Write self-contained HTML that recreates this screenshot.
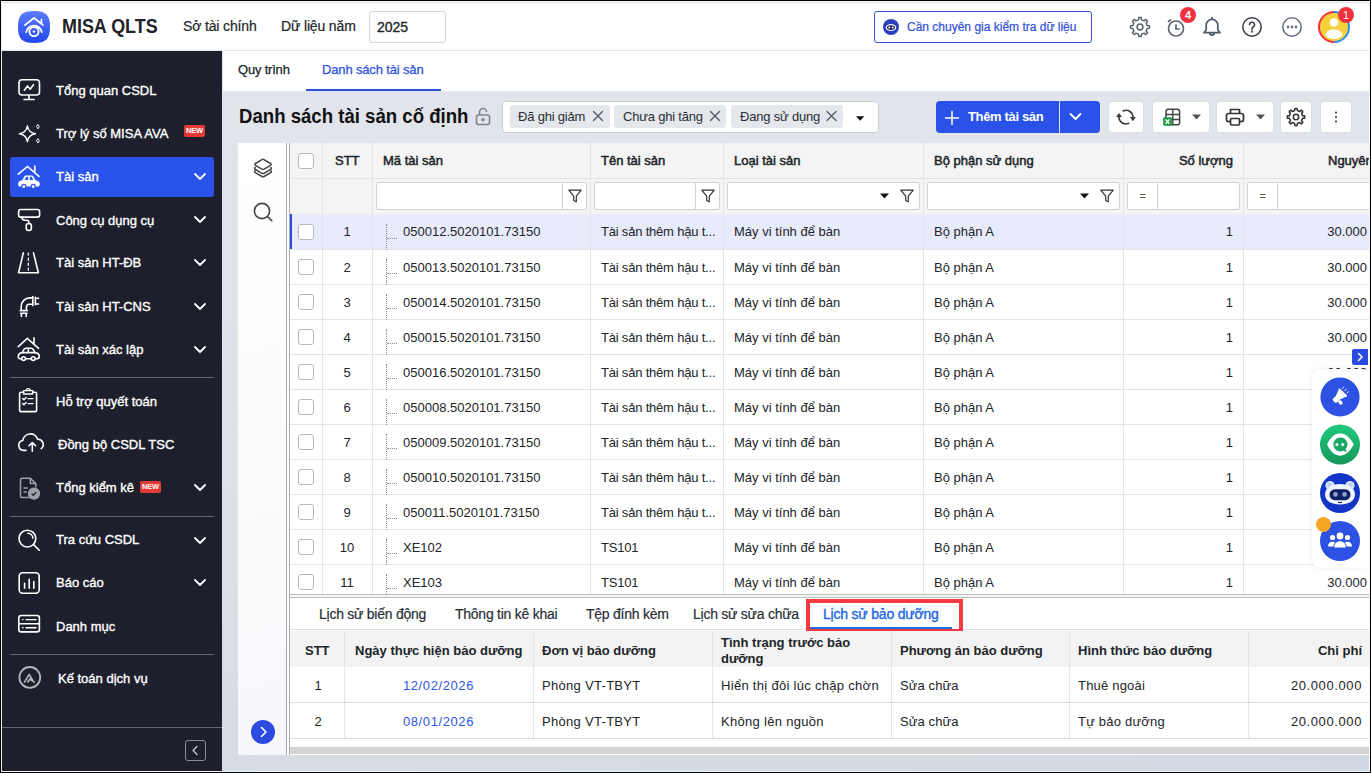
<!DOCTYPE html>
<html><head><meta charset="utf-8">
<style>
*{box-sizing:border-box;margin:0;padding:0}
html,body{width:1371px;height:773px;overflow:hidden;background:#000}
body{position:relative;font-family:"Liberation Sans",sans-serif;color:#212529;font-size:13px}
.a{position:absolute}
.t{position:absolute;white-space:nowrap;line-height:1}
#frame{position:absolute;left:1px;top:1px;width:1369px;height:771px;background:#f7f8fb}
#header{position:absolute;left:2px;top:2px;width:1367px;height:49px;background:#fff;border-bottom:1px solid #e3e5ea}
#side{position:absolute;left:2px;top:51px;width:220px;height:720px;background:#1d1f2d}
.si{position:absolute;left:0;width:220px;height:40px}
.si .lbl{position:absolute;left:54px;top:13px;color:#fff;font-size:13px;white-space:nowrap;line-height:14px;font-weight:bold;letter-spacing:-0.1px}
.si svg.ic{position:absolute;left:16px;top:9px}
.si svg.chev{position:absolute;left:192px;top:15px}
.sdiv{position:absolute;left:8px;width:204px;height:1px;background:#5d6070}
.sl{color:#fff;font-size:13px;line-height:14px;-webkit-text-stroke:0.35px #fff}
.new{position:absolute;background:#e53935;color:#fff;font-size:7.5px;font-weight:bold;border-radius:2px;width:21px;text-align:center;line-height:12px;height:12px;letter-spacing:-.2px}
#main{position:absolute;left:222px;top:51px;width:1147px;height:720px;background:linear-gradient(180deg,#e2e5eb 0%,#dfe3e9 50%,#d6dbe3 100%)}
#tabs{position:absolute;left:0;top:0;width:1146px;height:40px;background:#fff}
.tag{top:105px;height:23px;background:#e4e7ec;border-radius:3px}
.tt{top:110px;font-size:13px;color:#2b2f36;letter-spacing:-.2px}
.btn{position:absolute;top:101px;height:32px;background:#fff;border:1px solid #dcdfe5;border-radius:4px}
.hd{position:absolute;font-weight:bold;color:#212529;font-size:13px;white-space:nowrap;line-height:14px}
.hd2{font-weight:normal;-webkit-text-stroke:0.5px #212529}
.vl{position:absolute;width:1px;background:#e3e3e3}
.hl{position:absolute;height:1px;background:#e3e3e3}
.cell{position:absolute;white-space:nowrap;line-height:14px;font-size:13px;color:#212529}
.cb{position:absolute;width:16px;height:16px;border:1px solid #bcb7b7;border-radius:3px;background:#fff}
.fin{position:absolute;top:182px;height:28px;border:1px solid #cfd2d7;border-radius:2px;background:#fff}
</style></head>
<body>
<div id="frame"></div>
<!-- HEADER -->
<div id="header"></div>
<div class="a" style="left:2px;top:2px;width:1367px;height:1px;background:#e2e4e8"></div>
<!-- logo -->
<svg class="a" style="left:18px;top:11px" width="32" height="32" viewBox="0 0 32 32">
  <defs><linearGradient id="lg" x1="0" y1="0" x2="0" y2="1"><stop offset="0" stop-color="#5b7cff"/><stop offset="1" stop-color="#2447f0"/></linearGradient></defs>
  <path d="M16 0 C28 0 32 4 32 16 C32 28 28 32 16 32 C4 32 0 28 0 16 C0 4 4 0 16 0Z" fill="url(#lg)"/>
  <path d="M7 14 L16 7 L25 14" stroke="#fff" stroke-width="1.7" fill="none" stroke-linecap="round" stroke-linejoin="round"/>
  <path d="M23.4 8.6 v3.4" stroke="#fff" stroke-width="1.7" stroke-linecap="round"/>
  <path d="M8.2 21.2 A7.9 7.9 0 0 1 23.8 21.2" stroke="#fff" stroke-width="1.8" fill="none" stroke-linecap="round"/>
  <circle cx="16" cy="20.6" r="4.6" stroke="#fff" stroke-width="1.8" fill="none"/>
  <circle cx="16" cy="20.6" r="1.2" fill="#fff"/>
</svg>
<div class="t" style="left:62px;top:16.6px;font-size:19.6px;font-weight:bold;color:#1f2229;transform:scaleX(.915);transform-origin:0 0">MISA QLTS</div>
<div class="t" style="left:183px;top:19px;font-size:14px;color:#212529;-webkit-text-stroke:.2px #212529;letter-spacing:-.15px">Sở tài chính</div>
<div class="t" style="left:281px;top:19px;font-size:14px;color:#212529;-webkit-text-stroke:.2px #212529;letter-spacing:-.15px">Dữ liệu năm</div>
<div class="a" style="left:369px;top:11px;width:77px;height:32px;border:1px solid #d3d6dc;border-radius:3px;background:#fff"></div>
<div class="t" style="left:377px;top:20px;font-size:14px;color:#212529;-webkit-text-stroke:.35px #212529">2025</div>

<div class="a" style="left:874px;top:11px;width:218px;height:32px;border:1px solid #3553d6;border-radius:3px;background:#fff"></div>
<svg class="a" style="left:883px;top:19px" width="16" height="16" viewBox="0 0 16 16">
  <circle cx="8" cy="8" r="8" fill="#2a3fbf"/>
  <ellipse cx="8" cy="8.5" rx="5.2" ry="3.6" fill="#fff"/>
  <ellipse cx="8" cy="8.6" rx="4" ry="2.4" fill="#1c2460"/>
  <circle cx="6.3" cy="8.5" r="1" fill="#fff"/><circle cx="9.7" cy="8.5" r="1" fill="#fff"/>
</svg>
<div class="t" style="left:907px;top:21px;font-size:12px;color:#2f4fd6;-webkit-text-stroke:.2px #2f4fd6">Cần chuyên gia kiểm tra dữ liệu</div>

<!-- header icons -->
<svg class="a" style="left:1129px;top:16px" width="22" height="22" viewBox="0 0 24 24" fill="none" stroke="#5f6672" stroke-width="1.7" stroke-linejoin="round">
  <path d="M10.39 4.16L10.63 1.69L13.37 1.69L13.61 4.16L16.40 5.32L18.32 3.74L20.26 5.68L18.68 7.60L19.84 10.39L22.31 10.63L22.31 13.37L19.84 13.61L18.68 16.40L20.26 18.32L18.32 20.26L16.40 18.68L13.61 19.84L13.37 22.31L10.63 22.31L10.39 19.84L7.60 18.68L5.68 20.26L3.74 18.32L5.32 16.40L4.16 13.61L1.69 13.37L1.69 10.63L4.16 10.39L5.32 7.60L3.74 5.68L5.68 3.74L7.60 5.32Z"/>
  <circle cx="12" cy="12" r="3.2"/>
</svg>
<svg class="a" style="left:1165px;top:16px" width="22" height="22" viewBox="0 0 22 22" fill="none" stroke="#5f6672" stroke-width="1.7" stroke-linecap="round">
  <circle cx="11" cy="12.5" r="7.5"/>
  <path d="M11 9v4h3"/>
  <path d="M3.5 5.5l2-1.5"/>
</svg>
<div class="a" style="left:1180px;top:7px;width:16px;height:16px;border-radius:50%;background:#f0313d;color:#fff;font-size:11px;font-weight:bold;text-align:center;line-height:16px">4</div>
<svg class="a" style="left:1201px;top:16px" width="22" height="22" viewBox="0 0 22 22" fill="none" stroke="#4f5763" stroke-width="1.7" stroke-linejoin="round" stroke-linecap="round">
  <path d="M11 1.6v1.2"/>
  <path d="M3 16.6h16l-2.2-2.6V9.2a5.8 5.8 0 0 0-11.6 0V14z"/>
  <path d="M8.8 17a2.2 2.2 0 0 0 4.4 0"/>
</svg>
<svg class="a" style="left:1241px;top:16px" width="22" height="22" viewBox="0 0 22 22" fill="none" stroke="#383c44" stroke-width="1.5" stroke-linecap="round">
  <circle cx="11" cy="11" r="9.2"/>
  <path d="M8.5 8.8a2.5 2.5 0 1 1 3.6 2.2c-.8.4-1.1.9-1.1 1.8v.6"/>
  <circle cx="11" cy="15.6" r=".4" fill="#383c44"/>
</svg>
<svg class="a" style="left:1281px;top:16px" width="22" height="22" viewBox="0 0 22 22" fill="none" stroke="#6b7280" stroke-width="1.6">
  <circle cx="11" cy="11" r="9.2"/>
  <circle cx="7" cy="11" r=".6" fill="#6b7280"/><circle cx="11" cy="11" r=".6" fill="#6b7280"/><circle cx="15" cy="11" r=".6" fill="#6b7280"/>
</svg>
<svg class="a" style="left:1318px;top:11px" width="32" height="32" viewBox="0 0 32 32">
  <circle cx="16" cy="16" r="15" fill="#f4d13d"/>
  <path d="M16 1 A15 15 0 0 0 16 31" stroke="#f0313d" stroke-width="2" fill="none"/>
  <path d="M16 1 A15 15 0 0 1 16 31" stroke="#2c8cf4" stroke-width="2" fill="none"/>
  <circle cx="16" cy="11.5" r="4.3" fill="#fff"/>
  <path d="M7.5 24.5 C8 19.5 12 18.5 16 18.5 C20 18.5 24 19.5 24.5 24.5 C22 27 19 28 16 28 C13 28 10 27 7.5 24.5Z" fill="#fff"/>
</svg>
<div class="a" style="left:1338px;top:7px;width:16px;height:16px;border-radius:50%;background:#f0313d;color:#fff;font-size:11px;text-align:center;line-height:16px">1</div>

<!-- SIDEBAR -->
<div id="side"></div>
<div class="a" style="left:1px;top:51px;width:1px;height:720px;background:#e6e7ea"></div>
<div class="a" style="left:222px;top:51px;width:1px;height:720px;background:#d9dce2"></div>
<!-- SIDEITEMS -->
<div class="a" style="left:10px;top:157px;width:204px;height:40px;background:#2953ea;border-radius:3px"></div>
<!-- sidebar items -->
<svg class="a" style="left:0;top:0" width="222" height="773" viewBox="0 0 222 773" fill="none" stroke="#fff" stroke-width="1.6" stroke-linecap="round" stroke-linejoin="round">
  <!-- monitor -->
  <rect x="19" y="79.8" width="20.5" height="15.2" rx="3"/>
  <path d="M29 95.5v3.8M24 99.5h10"/>
  <path d="M24.3 90.2l3.2-4.3 2.7 3.3 3.3-4.6"/>
  <!-- sparkle -->
  <path d="M27.4 126 Q28.5 132.6 35.4 133.8 Q28.5 135 27.4 141.6 Q26.3 135 19.4 133.8 Q26.3 132.6 27.4 126Z" stroke-width="1.5"/>
  <path d="M38 124.8l1.3 2-1.3 2-1.3-2z" stroke-width="1"/>
  <path d="M38 139l1.3 2-1.3 2-1.3-2z" stroke-width="1"/>
  <!-- road -->
  <path d="M23.3 252.8L18.6 272.8H38.4L33.5 252.8"/>
  <path d="M28.3 253v2.2M28.3 258v2.4M28.3 263v2.4M28.3 268v2.2" stroke-width="1.2"/>
  <!-- roller -->
  <rect x="18.6" y="209.5" width="21" height="7.6" rx="2.2"/>
  <path d="M22 217.2c0 2 .8 3 3 3h1.8c1.4 0 2 .6 2 2v1.3"/>
  <rect x="26.2" y="223.5" width="5.2" height="7" rx="2.4"/>
  <!-- pipe -->
  <path d="M21.2 310V306.5A8.6 8.6 0 0 1 29.8 297.9H32.6"/>
  <path d="M26.4 310V307.2A3 3 0 0 1 29.4 304.2H32.6"/>
  <path d="M32.8 296.6V305.6M35.4 297.4V304.8M35.4 298.2H38.6M35.4 304H38.6"/>
  <path d="M20.2 310.6H27.4M20.6 313.2H27M21.4 313.2V316.4M26.2 313.2V316.4"/>
  <!-- house car outline (xac lap) -->
  <path d="M18.3 346.6L27.3 338.4L38.6 348.3M34 337.7v5.8"/>
  <path d="M22.2 352.6l1.7-3.2c.4-.8 1.2-1.2 2-1.2h5.3c.8 0 1.5.4 2 1.2l1.9 3.2c3 .4 4.2 1.4 4.2 3.7 0 1.6-.8 2.4-2.2 2.4H20.4c-1.3 0-2.1-.8-2.1-2.3 0-2.4 1.2-3.4 3.9-3.8z"/>
  <path d="M22.2 352.6h12.6M28.3 348.2v4.4"/>
  <circle cx="23.6" cy="358.6" r="1.9" fill="#1d1f2d"/><circle cx="33.2" cy="358.6" r="1.9" fill="#1d1f2d"/>
  <!-- clipboard -->
  <path d="M23.6 392.2h-2.3c-1 0-1.7.7-1.7 1.7v16c0 1 .7 1.7 1.7 1.7h13.6c1 0 1.7-.7 1.7-1.7v-16c0-1-.7-1.7-1.7-1.7h-2.3"/>
  <path d="M23.6 390.6h9.1v3.4h-9.1z M26.2 390.6a2 2 0 0 1 4 0" stroke-width="1.4"/>
  <path d="M22.6 398.4l1.3 1.3 2.2-2.3M28 398.6h5M22.6 403.4l1.3 1.3 2.2-2.3M28 403.6h5" stroke-width="1.4"/>
  <!-- cloud upload -->
  <path d="M26 450.4h-2.4a5 5 0 0 1-.8-9.9 7.6 7.6 0 0 1 14.8-1.2 5.2 5.2 0 0 1 3.6 9.3"/>
  <path d="M32.3 451.2v-8.4M29 445.8l3.3-3.3 3.3 3.3"/>
  <!-- search -->
  <circle cx="27.4" cy="538.6" r="8.4"/>
  <path d="M33.6 544.6l5.7 5.6"/>
  <path d="M27.8 533.2a5.4 5.4 0 0 1 5.1 5" stroke-width="1.4"/>
  <!-- bar chart -->
  <rect x="19.2" y="572.8" width="20" height="20.4" rx="3.4"/>
  <path d="M24.6 588.2v-5M29.2 588.2v-9M33.8 588.2v-6.6"/>
  <!-- list -->
  <rect x="18.8" y="615.5" width="20.6" height="16.4" rx="2.4"/>
  <path d="M18.8 623.7h20.6"/>
  <path d="M22.6 619.6h.4M26 619.6h10M22.6 627.8h.4M26 627.8h10" stroke-width="1.4"/>
</svg>
<!-- filled car-house (Tai san) -->
<svg class="a" style="left:0;top:0" width="60" height="200" viewBox="0 0 60 200">
  <path d="M18.3 174.2L27.5 166.5L39 176.4M34.8 166v5.4" stroke="#fff" stroke-width="1.6" fill="none" stroke-linecap="round"/>
  <path d="M22.3 180.2l1.8-3.4c.5-.8 1.2-1.3 2.1-1.3h5.2c.9 0 1.6.5 2.1 1.3l1.9 3.4c3 .4 4.4 1.5 4.4 3.8 0 1.7-.8 2.6-2.3 2.6H20.3c-1.4 0-2.2-.9-2.2-2.4 0-2.5 1.2-3.6 4.2-4z" fill="#fff"/>
  <path d="M24.6 180.1l1.3-2.7c.2-.4.5-.6.9-.6h1.4v3.3z M29.8 180.1v-3.3h1.4c.4 0 .7.2.9.6l1.3 2.7z" fill="#2953ea"/>
  <circle cx="23.8" cy="186.4" r="2.1" fill="#fff" stroke="#2953ea" stroke-width="1.2"/>
  <circle cx="33.2" cy="186.4" r="2.1" fill="#fff" stroke="#2953ea" stroke-width="1.2"/>
</svg>
<!-- grey doc check -->
<svg class="a" style="left:0;top:0" width="60" height="520" viewBox="0 0 60 520" fill="none" stroke="#9ea1aa" stroke-width="1.5" stroke-linejoin="round">
  <path d="M29.4 497.6h-7.4c-.9 0-1.5-.6-1.5-1.5v-16.4c0-.9.6-1.5 1.5-1.5h8.4l5.4 5.4v4"/>
  <path d="M30.4 478.2v5.4h5.4"/>
  <path d="M23.4 488h4.4M23.4 492h3.4" stroke-width="1.3"/>
  <circle cx="34" cy="493.6" r="5.4" fill="#9ea1aa"/>
  <path d="M31.6 493.6l1.6 1.6 3-3" stroke="#1d1f2d" stroke-width="1.3"/>
</svg>
<!-- ke toan logo -->
<svg class="a" style="left:17px;top:666px" width="26" height="26" viewBox="0 0 26 26" fill="none" stroke="#b4b6bc" stroke-width="1.8">
  <circle cx="12.8" cy="11.4" r="10.4"/>
  <path d="M7.2 16.6l5-8.2 3.6 6.2M10.4 16.6l3-4 1.4 2.4M15.6 14.6l2 2" stroke-width="1.7" stroke-linejoin="round"/>
</svg>
<div class="t sl" style="left:56px;top:83.8px">Tổng quan CSDL</div>
<div class="t sl" style="left:56px;top:126.8px">Trợ lý số MISA AVA</div>
<div class="new" style="left:184px;top:125px">NEW</div>
<div class="t sl" style="left:56px;top:170.3px">Tài sản</div>
<svg class="a" style="left:194px;top:173.0px" width="12" height="7" viewBox="0 0 12 7"><path d="M1 1l5 5 5-5" stroke="#fff" stroke-width="1.8" fill="none" stroke-linecap="round" stroke-linejoin="round"/></svg>
<div class="t sl" style="left:56px;top:213.5px">Công cụ dụng cụ</div>
<svg class="a" style="left:194px;top:216.2px" width="12" height="7" viewBox="0 0 12 7"><path d="M1 1l5 5 5-5" stroke="#fff" stroke-width="1.8" fill="none" stroke-linecap="round" stroke-linejoin="round"/></svg>
<div class="t sl" style="left:56px;top:256.3px">Tài sản HT-ĐB</div>
<svg class="a" style="left:194px;top:259.0px" width="12" height="7" viewBox="0 0 12 7"><path d="M1 1l5 5 5-5" stroke="#fff" stroke-width="1.8" fill="none" stroke-linecap="round" stroke-linejoin="round"/></svg>
<div class="t sl" style="left:56px;top:300.2px">Tài sản HT-CNS</div>
<svg class="a" style="left:194px;top:302.9px" width="12" height="7" viewBox="0 0 12 7"><path d="M1 1l5 5 5-5" stroke="#fff" stroke-width="1.8" fill="none" stroke-linecap="round" stroke-linejoin="round"/></svg>
<div class="t sl" style="left:56px;top:343.3px">Tài sản xác lập</div>
<svg class="a" style="left:194px;top:346.0px" width="12" height="7" viewBox="0 0 12 7"><path d="M1 1l5 5 5-5" stroke="#fff" stroke-width="1.8" fill="none" stroke-linecap="round" stroke-linejoin="round"/></svg>
<div class="t sl" style="left:56px;top:395.0px">Hỗ trợ quyết toán</div>
<div class="t sl" style="left:58px;top:438.4px">Đồng bộ CSDL TSC</div>
<div class="t sl" style="left:56px;top:481.2px">Tổng kiểm kê</div>
<svg class="a" style="left:194px;top:483.9px" width="12" height="7" viewBox="0 0 12 7"><path d="M1 1l5 5 5-5" stroke="#fff" stroke-width="1.8" fill="none" stroke-linecap="round" stroke-linejoin="round"/></svg>
<div class="new" style="left:140px;top:481px">NEW</div>
<div class="t sl" style="left:56px;top:533px">Tra cứu CSDL</div>
<svg class="a" style="left:194px;top:536.5px" width="12" height="7" viewBox="0 0 12 7"><path d="M1 1l5 5 5-5" stroke="#fff" stroke-width="1.8" fill="none" stroke-linecap="round" stroke-linejoin="round"/></svg>
<div class="t sl" style="left:56px;top:576.3px">Báo cáo</div>
<svg class="a" style="left:194px;top:579.0px" width="12" height="7" viewBox="0 0 12 7"><path d="M1 1l5 5 5-5" stroke="#fff" stroke-width="1.8" fill="none" stroke-linecap="round" stroke-linejoin="round"/></svg>
<div class="t sl" style="left:56px;top:620.2px">Danh mục</div>
<div class="t sl" style="left:58px;top:671.8px">Kế toán dịch vụ</div>
<div class="a" style="left:10px;top:377px;width:204px;height:1px;background:#62656f"></div>
<div class="a" style="left:10px;top:516px;width:204px;height:1px;background:#62656f"></div>
<div class="a" style="left:10px;top:654px;width:204px;height:1px;background:#62656f"></div>
<div class="a" style="left:2px;top:727px;width:220px;height:1px;background:#62656f"></div>
<div class="a" style="left:185px;top:740px;width:21px;height:21px;border:1px solid #8a8d96;border-radius:3px"></div>
<svg class="a" style="left:185px;top:740px" width="21" height="21" viewBox="0 0 21 21"><path d="M12 6.5l-4 4 4 4" stroke="#c9cbd1" stroke-width="1.4" fill="none" stroke-linecap="round" stroke-linejoin="round"/></svg>
<!-- /SIDEITEMS -->

<!-- MAIN -->
<div id="main"></div>
<div class="a" style="left:223px;top:51px;width:1146px;height:40px;background:#fff"></div>
<div class="t" style="left:238px;top:63px;font-size:13px;color:#212529;-webkit-text-stroke:.25px #212529;letter-spacing:-.2px">Quy trình</div>
<div class="t" style="left:322px;top:63px;font-size:13px;color:#2f50e0;-webkit-text-stroke:.25px #2f50e0;letter-spacing:-.15px">Danh sách tài sản</div>
<div class="a" style="left:306px;top:89px;width:135px;height:2px;background:#2f50e0"></div>

<div class="t" style="left:238.5px;top:107.4px;font-size:19.5px;font-weight:bold;color:#111;transform:scaleX(.954);transform-origin:0 0">Danh sách tài sản cố định</div>
<svg class="a" style="left:475px;top:107px" width="16" height="19" viewBox="0 0 16 19" fill="none" stroke="#7c8494" stroke-width="1.6">
  <rect x="1.5" y="8" width="13" height="9.5" rx="2"/>
  <path d="M4.5 8V5a3.5 3.5 0 0 1 7 0"/>
  <circle cx="8" cy="12.8" r=".9" fill="#7c8494"/>
</svg>
<!-- FILTER BOX -->
<div class="a" style="left:502px;top:101px;width:377px;height:32px;border:1px solid #c9cdd4;border-radius:4px;background:#fff"></div>
<div class="a tag" style="left:510px;width:100px"></div>
<div class="t tt" style="left:518px">Đã ghi giảm</div>
<div class="a tag" style="left:614px;width:112px"></div>
<div class="t tt" style="left:623px">Chưa ghi tăng</div>
<div class="a tag" style="left:731px;width:112px"></div>
<div class="t tt" style="left:740px">Đang sử dụng</div>
<svg class="a" style="left:0;top:0" width="900" height="140" viewBox="0 0 900 140" fill="none" stroke="#555b66" stroke-width="1.4" stroke-linecap="round">
  <path d="M593.5 111.5l9 9M602.5 111.5l-9 9"/>
  <path d="M710.5 111.5l9 9M719.5 111.5l-9 9"/>
  <path d="M827 111.5l9 9M836 111.5l-9 9"/>
  <path d="M856 116.3h8.4l-4.2 4.4z" fill="#111" stroke="none"/>
</svg>
<!-- TOOLBAR -->
<div class="a" style="left:936px;top:101px;width:164px;height:32px;background:#2b52e8;border-radius:4px"></div>
<div class="a" style="left:1059px;top:101px;width:1px;height:32px;background:#dfe5ff"></div>
<svg class="a" style="left:944px;top:110px" width="16" height="16" viewBox="0 0 16 16"><path d="M8 1.5v13M1.5 8h13" stroke="#fff" stroke-width="1.5" stroke-linecap="round"/></svg>
<div class="t" style="left:968px;top:110px;font-size:13px;font-weight:bold;color:#fff;letter-spacing:-0.35px">Thêm tài sản</div>
<svg class="a" style="left:1069px;top:112px" width="13" height="9" viewBox="0 0 13 9"><path d="M1.5 2l5 5 5-5" stroke="#fff" stroke-width="1.8" fill="none" stroke-linecap="round" stroke-linejoin="round"/></svg>

<div class="btn" style="left:1108px;width:36px"></div>
<svg class="a" style="left:0;top:0" width="1371" height="140" viewBox="0 0 1371 140">
  <path d="M1123.2 110.9A6.9 6.9 0 0 1 1132.9 117.6M1128.8 123.3A6.9 6.9 0 0 1 1119 116.6" stroke="#3a3d44" stroke-width="1.7" fill="none" stroke-linecap="round"/>
  <path d="M1129.9 117.1h6l-3 4.2z M1116 117.1h6l-3-4.2z" fill="#3a3d44"/>
</svg>
<div class="btn" style="left:1152px;width:58px"></div>
<svg class="a" style="left:1160px;top:106px" width="24" height="22" viewBox="0 0 24 22" fill="none">
  <rect x="6" y="3.2" width="13.6" height="15.6" rx="2.4" stroke="#444" stroke-width="1.5"/>
  <path d="M6 8.5h13.6M6 13.5h13.6M12.8 3.2v15.6" stroke="#444" stroke-width="1.4"/>
  <rect x="3.2" y="11.2" width="8.6" height="8.6" rx="1" fill="#1e9e45"/>
  <path d="M5.6 13.5l3.8 4.2M9.4 13.5l-3.8 4.2" stroke="#fff" stroke-width="1.3"/>
</svg>
<svg class="a" style="left:1192px;top:114px" width="9" height="6" viewBox="0 0 9 6"><path d="M0 .5h9L4.5 5.5z" fill="#555"/></svg>
<div class="btn" style="left:1216px;width:58px"></div>
<svg class="a" style="left:1224px;top:106px" width="22" height="22" viewBox="0 0 22 22" fill="none" stroke="#333" stroke-width="1.7" stroke-linejoin="round">
  <path d="M6.5 7.5V3.5h9v4"/>
  <path d="M6 15.5H4.5a2 2 0 0 1-2-2v-4a2 2 0 0 1 2-2h13a2 2 0 0 1 2 2v4a2 2 0 0 1-2 2H16"/>
  <rect x="6.5" y="12.5" width="9" height="6.5" rx="1.2"/>
</svg>
<svg class="a" style="left:1256px;top:114px" width="9" height="6" viewBox="0 0 9 6"><path d="M0 .5h9L4.5 5.5z" fill="#555"/></svg>
<div class="btn" style="left:1280px;width:32px"></div>
<svg class="a" style="left:1286px;top:107px" width="20" height="20" viewBox="0 0 24 24" fill="none" stroke="#333" stroke-width="1.8" stroke-linejoin="round">
  <path d="M10.39 4.16L10.63 1.69L13.37 1.69L13.61 4.16L16.40 5.32L18.32 3.74L20.26 5.68L18.68 7.60L19.84 10.39L22.31 10.63L22.31 13.37L19.84 13.61L18.68 16.40L20.26 18.32L18.32 20.26L16.40 18.68L13.61 19.84L13.37 22.31L10.63 22.31L10.39 19.84L7.60 18.68L5.68 20.26L3.74 18.32L5.32 16.40L4.16 13.61L1.69 13.37L1.69 10.63L4.16 10.39L5.32 7.60L3.74 5.68L5.68 3.74L7.60 5.32Z"/>
  <circle cx="12" cy="12" r="3.2"/>
</svg>
<div class="btn" style="left:1320px;width:32px"></div>
<svg class="a" style="left:1321px;top:106px" width="30" height="22" viewBox="0 0 30 22" fill="#444"><circle cx="15" cy="6.5" r="1.1"/><circle cx="15" cy="11" r="1.1"/><circle cx="15" cy="15.5" r="1.1"/></svg>

<!-- GRID -->
<div class="a" style="left:238px;top:143px;width:1131px;height:612px;background:#fff"></div>
<div class="a" style="left:238px;top:143px;width:48px;height:612px;background:linear-gradient(160deg,#ffffff,#f6f7fa)"></div>
<div class="a" style="left:286px;top:143px;width:1px;height:612px;background:#a9abb0"></div>
<div class="a" style="left:289px;top:143px;width:1px;height:612px;background:#a9abb0"></div>
<div class="a" style="left:290px;top:143px;width:1079px;height:71px;background:#f4f4f4"></div>
<div class="a" style="left:290px;top:178px;width:1079px;height:1px;background:#e2e2e2"></div>
<div class="a" style="left:290px;top:215px;width:1079px;height:379px;overflow:hidden">
<div class="a" style="left:0;top:0px;width:1079px;height:35px;background:#e8ebfb;border-bottom:1px solid #e4e4e4"></div>
<div class="cb" style="left:8px;top:9px"></div>
<div class="cell" style="left:32px;width:50px;top:10px;text-align:center">1</div>
<div class="a" style="left:96px;top:9px;width:0;height:26px;border-left:1px dotted #8c8c8c"></div>
<div class="a" style="left:97px;top:23px;width:10px;height:0;border-top:1px dotted #8c8c8c"></div>
<div class="cell" style="left:113px;top:10px">050012.5020101.73150</div>
<div class="cell" style="left:311px;top:10px;letter-spacing:-.2px">Tài sản thêm hậu t...</div>
<div class="cell" style="left:444px;top:10px">Máy vi tính để bàn</div>
<div class="cell" style="left:644px;top:10px">Bộ phận A</div>
<div class="cell" style="left:833px;width:110px;top:10px;text-align:right">1</div>
<div class="cell" style="left:960px;width:117px;top:10px;text-align:right">30.000</div>
<div class="a" style="left:0;top:35px;width:1079px;height:35px;background:#fff;border-bottom:1px solid #e4e4e4"></div>
<div class="cb" style="left:8px;top:44px"></div>
<div class="cell" style="left:32px;width:50px;top:46px;text-align:center">2</div>
<div class="a" style="left:96px;top:44px;width:0;height:26px;border-left:1px dotted #8c8c8c"></div>
<div class="a" style="left:97px;top:58px;width:10px;height:0;border-top:1px dotted #8c8c8c"></div>
<div class="cell" style="left:113px;top:46px">050013.5020101.73150</div>
<div class="cell" style="left:311px;top:46px;letter-spacing:-.2px">Tài sản thêm hậu t...</div>
<div class="cell" style="left:444px;top:46px">Máy vi tính để bàn</div>
<div class="cell" style="left:644px;top:46px">Bộ phận A</div>
<div class="cell" style="left:833px;width:110px;top:46px;text-align:right">1</div>
<div class="cell" style="left:960px;width:117px;top:46px;text-align:right">30.000</div>
<div class="a" style="left:0;top:70px;width:1079px;height:35px;background:#fff;border-bottom:1px solid #e4e4e4"></div>
<div class="cb" style="left:8px;top:79px"></div>
<div class="cell" style="left:32px;width:50px;top:81px;text-align:center">3</div>
<div class="a" style="left:96px;top:79px;width:0;height:26px;border-left:1px dotted #8c8c8c"></div>
<div class="a" style="left:97px;top:93px;width:10px;height:0;border-top:1px dotted #8c8c8c"></div>
<div class="cell" style="left:113px;top:81px">050014.5020101.73150</div>
<div class="cell" style="left:311px;top:81px;letter-spacing:-.2px">Tài sản thêm hậu t...</div>
<div class="cell" style="left:444px;top:81px">Máy vi tính để bàn</div>
<div class="cell" style="left:644px;top:81px">Bộ phận A</div>
<div class="cell" style="left:833px;width:110px;top:81px;text-align:right">1</div>
<div class="cell" style="left:960px;width:117px;top:81px;text-align:right">30.000</div>
<div class="a" style="left:0;top:105px;width:1079px;height:35px;background:#fff;border-bottom:1px solid #e4e4e4"></div>
<div class="cb" style="left:8px;top:114px"></div>
<div class="cell" style="left:32px;width:50px;top:116px;text-align:center">4</div>
<div class="a" style="left:96px;top:114px;width:0;height:26px;border-left:1px dotted #8c8c8c"></div>
<div class="a" style="left:97px;top:128px;width:10px;height:0;border-top:1px dotted #8c8c8c"></div>
<div class="cell" style="left:113px;top:116px">050015.5020101.73150</div>
<div class="cell" style="left:311px;top:116px;letter-spacing:-.2px">Tài sản thêm hậu t...</div>
<div class="cell" style="left:444px;top:116px">Máy vi tính để bàn</div>
<div class="cell" style="left:644px;top:116px">Bộ phận A</div>
<div class="cell" style="left:833px;width:110px;top:116px;text-align:right">1</div>
<div class="cell" style="left:960px;width:117px;top:116px;text-align:right">30.000</div>
<div class="a" style="left:0;top:140px;width:1079px;height:35px;background:#fff;border-bottom:1px solid #e4e4e4"></div>
<div class="cb" style="left:8px;top:149px"></div>
<div class="cell" style="left:32px;width:50px;top:151px;text-align:center">5</div>
<div class="a" style="left:96px;top:149px;width:0;height:26px;border-left:1px dotted #8c8c8c"></div>
<div class="a" style="left:97px;top:163px;width:10px;height:0;border-top:1px dotted #8c8c8c"></div>
<div class="cell" style="left:113px;top:151px">050016.5020101.73150</div>
<div class="cell" style="left:311px;top:151px;letter-spacing:-.2px">Tài sản thêm hậu t...</div>
<div class="cell" style="left:444px;top:151px">Máy vi tính để bàn</div>
<div class="cell" style="left:644px;top:151px">Bộ phận A</div>
<div class="cell" style="left:833px;width:110px;top:151px;text-align:right">1</div>
<div class="cell" style="left:960px;width:117px;top:151px;text-align:right">30.000</div>
<div class="a" style="left:0;top:175px;width:1079px;height:35px;background:#fff;border-bottom:1px solid #e4e4e4"></div>
<div class="cb" style="left:8px;top:184px"></div>
<div class="cell" style="left:32px;width:50px;top:186px;text-align:center">6</div>
<div class="a" style="left:96px;top:184px;width:0;height:26px;border-left:1px dotted #8c8c8c"></div>
<div class="a" style="left:97px;top:198px;width:10px;height:0;border-top:1px dotted #8c8c8c"></div>
<div class="cell" style="left:113px;top:186px">050008.5020101.73150</div>
<div class="cell" style="left:311px;top:186px;letter-spacing:-.2px">Tài sản thêm hậu t...</div>
<div class="cell" style="left:444px;top:186px">Máy vi tính để bàn</div>
<div class="cell" style="left:644px;top:186px">Bộ phận A</div>
<div class="cell" style="left:833px;width:110px;top:186px;text-align:right">1</div>
<div class="cell" style="left:960px;width:117px;top:186px;text-align:right">30.000</div>
<div class="a" style="left:0;top:210px;width:1079px;height:35px;background:#fff;border-bottom:1px solid #e4e4e4"></div>
<div class="cb" style="left:8px;top:219px"></div>
<div class="cell" style="left:32px;width:50px;top:221px;text-align:center">7</div>
<div class="a" style="left:96px;top:219px;width:0;height:26px;border-left:1px dotted #8c8c8c"></div>
<div class="a" style="left:97px;top:233px;width:10px;height:0;border-top:1px dotted #8c8c8c"></div>
<div class="cell" style="left:113px;top:221px">050009.5020101.73150</div>
<div class="cell" style="left:311px;top:221px;letter-spacing:-.2px">Tài sản thêm hậu t...</div>
<div class="cell" style="left:444px;top:221px">Máy vi tính để bàn</div>
<div class="cell" style="left:644px;top:221px">Bộ phận A</div>
<div class="cell" style="left:833px;width:110px;top:221px;text-align:right">1</div>
<div class="cell" style="left:960px;width:117px;top:221px;text-align:right">30.000</div>
<div class="a" style="left:0;top:245px;width:1079px;height:35px;background:#fff;border-bottom:1px solid #e4e4e4"></div>
<div class="cb" style="left:8px;top:254px"></div>
<div class="cell" style="left:32px;width:50px;top:256px;text-align:center">8</div>
<div class="a" style="left:96px;top:254px;width:0;height:26px;border-left:1px dotted #8c8c8c"></div>
<div class="a" style="left:97px;top:268px;width:10px;height:0;border-top:1px dotted #8c8c8c"></div>
<div class="cell" style="left:113px;top:256px">050010.5020101.73150</div>
<div class="cell" style="left:311px;top:256px;letter-spacing:-.2px">Tài sản thêm hậu t...</div>
<div class="cell" style="left:444px;top:256px">Máy vi tính để bàn</div>
<div class="cell" style="left:644px;top:256px">Bộ phận A</div>
<div class="cell" style="left:833px;width:110px;top:256px;text-align:right">1</div>
<div class="cell" style="left:960px;width:117px;top:256px;text-align:right">30.000</div>
<div class="a" style="left:0;top:280px;width:1079px;height:35px;background:#fff;border-bottom:1px solid #e4e4e4"></div>
<div class="cb" style="left:8px;top:289px"></div>
<div class="cell" style="left:32px;width:50px;top:291px;text-align:center">9</div>
<div class="a" style="left:96px;top:289px;width:0;height:26px;border-left:1px dotted #8c8c8c"></div>
<div class="a" style="left:97px;top:303px;width:10px;height:0;border-top:1px dotted #8c8c8c"></div>
<div class="cell" style="left:113px;top:291px">050011.5020101.73150</div>
<div class="cell" style="left:311px;top:291px;letter-spacing:-.2px">Tài sản thêm hậu t...</div>
<div class="cell" style="left:444px;top:291px">Máy vi tính để bàn</div>
<div class="cell" style="left:644px;top:291px">Bộ phận A</div>
<div class="cell" style="left:833px;width:110px;top:291px;text-align:right">1</div>
<div class="cell" style="left:960px;width:117px;top:291px;text-align:right">30.000</div>
<div class="a" style="left:0;top:315px;width:1079px;height:35px;background:#fff;border-bottom:1px solid #e4e4e4"></div>
<div class="cb" style="left:8px;top:324px"></div>
<div class="cell" style="left:32px;width:50px;top:326px;text-align:center">10</div>
<div class="a" style="left:96px;top:324px;width:0;height:26px;border-left:1px dotted #8c8c8c"></div>
<div class="a" style="left:97px;top:338px;width:10px;height:0;border-top:1px dotted #8c8c8c"></div>
<div class="cell" style="left:113px;top:326px">XE102</div>
<div class="cell" style="left:311px;top:326px;letter-spacing:-.2px">TS101</div>
<div class="cell" style="left:444px;top:326px">Máy vi tính để bàn</div>
<div class="cell" style="left:644px;top:326px">Bộ phận A</div>
<div class="cell" style="left:833px;width:110px;top:326px;text-align:right">1</div>
<div class="cell" style="left:960px;width:117px;top:326px;text-align:right">30.000</div>
<div class="a" style="left:0;top:350px;width:1079px;height:35px;background:#fff;border-bottom:1px solid #e4e4e4"></div>
<div class="cb" style="left:8px;top:359px"></div>
<div class="cell" style="left:32px;width:50px;top:361px;text-align:center">11</div>
<div class="a" style="left:96px;top:359px;width:0;height:26px;border-left:1px dotted #8c8c8c"></div>
<div class="a" style="left:97px;top:373px;width:10px;height:0;border-top:1px dotted #8c8c8c"></div>
<div class="cell" style="left:113px;top:361px">XE103</div>
<div class="cell" style="left:311px;top:361px;letter-spacing:-.2px">TS101</div>
<div class="cell" style="left:444px;top:361px">Máy vi tính để bàn</div>
<div class="cell" style="left:644px;top:361px">Bộ phận A</div>
<div class="cell" style="left:833px;width:110px;top:361px;text-align:right">1</div>
<div class="cell" style="left:960px;width:117px;top:361px;text-align:right">30.000</div>
<div class="a" style="left:0;top:0;width:2px;height:34px;background:#2b4be0"></div>
</div>
<div class="a" style="left:290px;top:214px;width:1079px;height:1px;background:#e8ebfb"></div><div class="a" style="left:290px;top:214px;width:2px;height:1px;background:#2b4be0"></div>
<div class="a" style="left:322px;top:143px;width:1px;height:452px;background:#e4e4e4"></div>
<div class="a" style="left:372px;top:143px;width:1px;height:452px;background:#e4e4e4"></div>
<div class="a" style="left:590px;top:143px;width:1px;height:452px;background:#e4e4e4"></div>
<div class="a" style="left:723px;top:143px;width:1px;height:452px;background:#e4e4e4"></div>
<div class="a" style="left:923px;top:143px;width:1px;height:452px;background:#e4e4e4"></div>
<div class="a" style="left:1123px;top:143px;width:1px;height:452px;background:#e4e4e4"></div>
<div class="a" style="left:1243px;top:143px;width:1px;height:452px;background:#e4e4e4"></div>
<div class="cb" style="left:298px;top:153px"></div>
<div class="hd hd2" style="left:335px;top:154px">STT</div>
<div class="hd hd2" style="left:383px;top:154px">Mã tài sản</div>
<div class="hd hd2" style="left:601px;top:154px">Tên tài sản</div>
<div class="hd hd2" style="left:734px;top:154px">Loại tài sản</div>
<div class="hd hd2" style="left:934px;top:154px">Bộ phận sử dụng</div>
<div class="hd hd2" style="left:1113px;width:120px;text-align:right;top:154px">Số lượng</div>
<div class="hd hd2" style="left:1328px;top:154px">Nguyên giá</div>
<div class="fin" style="left:376px;width:211px"></div><div class="a" style="left:562px;top:182px;width:1px;height:28px;background:#cfd2d7"></div><svg class="a" style="left:567px;top:188px" width="16" height="16" viewBox="0 0 16 16"><path d="M1.8 2.2h12.4L9.3 8.2v5.6l-2.6-1.3V8.2z" fill="none" stroke="#333" stroke-width="1.2" stroke-linejoin="round"/></svg>
<div class="fin" style="left:594px;width:126px"></div><div class="a" style="left:695px;top:182px;width:1px;height:28px;background:#cfd2d7"></div><svg class="a" style="left:700px;top:188px" width="16" height="16" viewBox="0 0 16 16"><path d="M1.8 2.2h12.4L9.3 8.2v5.6l-2.6-1.3V8.2z" fill="none" stroke="#333" stroke-width="1.2" stroke-linejoin="round"/></svg>
<div class="fin" style="left:727px;width:193px"></div><svg class="a" style="left:879.5px;top:193px" width="9" height="6" viewBox="0 0 9 6"><path d="M0 .5h9L4.5 5.5z" fill="#111"/></svg><svg class="a" style="left:899px;top:188px" width="16" height="16" viewBox="0 0 16 16"><path d="M1.8 2.2h12.4L9.3 8.2v5.6l-2.6-1.3V8.2z" fill="none" stroke="#333" stroke-width="1.2" stroke-linejoin="round"/></svg>
<div class="fin" style="left:927px;width:193px"></div><svg class="a" style="left:1079.5px;top:193px" width="9" height="6" viewBox="0 0 9 6"><path d="M0 .5h9L4.5 5.5z" fill="#111"/></svg><svg class="a" style="left:1099px;top:188px" width="16" height="16" viewBox="0 0 16 16"><path d="M1.8 2.2h12.4L9.3 8.2v5.6l-2.6-1.3V8.2z" fill="none" stroke="#333" stroke-width="1.2" stroke-linejoin="round"/></svg>
<div class="fin" style="left:1127px;width:113px"></div><div class="a" style="left:1157px;top:182px;width:1px;height:28px;background:#cfd2d7"></div><div class="t" style="left:1139.5px;top:191px;font-size:11px;color:#555">=</div>
<div class="fin" style="left:1247px;width:125px"></div><div class="a" style="left:1277px;top:182px;width:1px;height:28px;background:#cfd2d7"></div><div class="t" style="left:1259.5px;top:191px;font-size:11px;color:#555">=</div>
<div class="a" style="left:290px;top:594px;width:1079px;height:1px;background:#bdbdbd"></div>
<div class="a" style="left:290px;top:595px;width:1079px;height:2px;background:#f6f6f6"></div>
<div class="a" style="left:290px;top:597px;width:1079px;height:1px;background:#bdbdbd"></div>
<svg class="a" style="left:252px;top:157px" width="22" height="22" viewBox="0 0 22 22" fill="none" stroke="#444" stroke-width="1.5" stroke-linejoin="round" stroke-linecap="round">
  <path d="M10 2.6c.6-.35 1.4-.35 2 0l6.6 3.9c.7.4.7 1.4 0 1.8L12 12.2c-.6.35-1.4.35-2 0L3.4 8.3c-.7-.4-.7-1.4 0-1.8z"/>
  <path d="M3.2 10.6l-.1.1c-.6.5-.5 1.3.2 1.7L10 16.3c.6.35 1.4.35 2 0l6.7-3.9c.7-.4.8-1.2.2-1.7"/>
  <path d="M3.2 13.8l-.1.1c-.6.5-.5 1.3.2 1.7L10 19.5c.6.35 1.4.35 2 0l6.7-3.9c.7-.4.8-1.2.2-1.7"/>
</svg>
<svg class="a" style="left:252px;top:201px" width="22" height="22" viewBox="0 0 22 22" fill="none" stroke="#444" stroke-width="1.6" stroke-linecap="round">
  <circle cx="10" cy="10" r="7.6"/><path d="M15.6 15.6l4.2 4.2"/>
</svg>
<div class="a" style="left:251px;top:720px;width:24px;height:24px;border-radius:50%;background:#2b4be0"></div>
<svg class="a" style="left:251px;top:720px" width="24" height="24" viewBox="0 0 24 24"><path d="M10.5 7.5l4.5 4.5-4.5 4.5" stroke="#fff" stroke-width="1.6" fill="none" stroke-linecap="round" stroke-linejoin="round"/></svg>
<!-- /GRID -->
<!-- BOTTOM -->
<div class="t" style="left:319px;top:607px;font-size:14px;color:#2b2f36;letter-spacing:-.25px;-webkit-text-stroke:.2px #2b2f36">Lịch sử biến động</div>
<div class="t" style="left:455px;top:607px;font-size:14px;color:#2b2f36;letter-spacing:-.25px;-webkit-text-stroke:.2px #2b2f36">Thông tin kê khai</div>
<div class="t" style="left:586px;top:607px;font-size:14px;color:#2b2f36;letter-spacing:-.25px;-webkit-text-stroke:.2px #2b2f36">Tệp đính kèm</div>
<div class="t" style="left:693px;top:607px;font-size:14px;color:#2b2f36;letter-spacing:-.25px;-webkit-text-stroke:.2px #2b2f36">Lịch sử sửa chữa</div>
<div class="t" style="left:823px;top:607px;font-size:14px;color:#2268e4;letter-spacing:-.2px;-webkit-text-stroke:.35px #2268e4">Lịch sử bảo dưỡng</div>
<div class="a" style="left:810px;top:627px;width:142px;height:2px;background:#2268e4"></div>
<div class="a" style="left:290px;top:629px;width:1079px;height:1px;background:#dde0e6"></div>
<div class="a" style="left:806px;top:599px;width:157px;height:34px;border:4px solid #f43a40"></div>
<div class="a" style="left:290px;top:631px;width:1079px;height:36px;background:#f3f3f3"></div>
<div class="a" style="left:344px;top:631px;width:1px;height:107px;background:#e6e6ea"></div>
<div class="a" style="left:533px;top:631px;width:1px;height:107px;background:#e6e6ea"></div>
<div class="a" style="left:712px;top:631px;width:1px;height:107px;background:#e6e6ea"></div>
<div class="a" style="left:891px;top:631px;width:1px;height:107px;background:#e6e6ea"></div>
<div class="a" style="left:1069px;top:631px;width:1px;height:107px;background:#e6e6ea"></div>
<div class="a" style="left:1248px;top:631px;width:1px;height:107px;background:#e6e6ea"></div>
<div class="hd" style="left:305px;top:644px">STT</div>
<div class="hd" style="left:355px;top:644px">Ngày thực hiện bảo dưỡng</div>
<div class="hd" style="left:542px;top:644px">Đơn vị bảo dưỡng</div>
<div class="hd" style="left:900px;top:644px">Phương án bảo dưỡng</div>
<div class="hd" style="left:1078px;top:644px">Hình thức bảo dưỡng</div>
<div class="hd" style="left:721px;top:635px;line-height:16px">Tình trạng trước bảo<br>dưỡng</div>
<div class="hd" style="left:1240px;width:122px;text-align:right;top:644px">Chi phí</div>
<div class="a" style="left:290px;top:702px;width:1079px;height:1px;background:#d9dde6"></div>
<div class="cell" style="left:291px;width:54px;text-align:center;top:678.5px">1</div>
<div class="cell" style="left:344px;width:189px;text-align:center;top:678.5px;color:#2f56e6;letter-spacing:.6px">12/02/2026</div>
<div class="cell" style="left:542px;top:678.5px;letter-spacing:.3px">Phòng VT-TBYT</div>
<div class="cell" style="left:721px;top:678.5px;letter-spacing:.3px">Hiển thị đôi lúc chập chờn</div>
<div class="cell" style="left:900px;top:678.5px;letter-spacing:.1px">Sửa chữa</div>
<div class="cell" style="left:1078px;top:678.5px;letter-spacing:.2px">Thuê ngoài</div>
<div class="cell" style="left:1200px;width:162px;text-align:right;top:678.5px;letter-spacing:.6px">20.000.000</div>
<div class="a" style="left:290px;top:738px;width:1079px;height:1px;background:#d9dde6"></div>
<div class="cell" style="left:291px;width:54px;text-align:center;top:714.5px">2</div>
<div class="cell" style="left:344px;width:189px;text-align:center;top:714.5px;color:#2f56e6;letter-spacing:.6px">08/01/2026</div>
<div class="cell" style="left:542px;top:714.5px;letter-spacing:.3px">Phòng VT-TBYT</div>
<div class="cell" style="left:721px;top:714.5px;letter-spacing:.3px">Không lên nguồn</div>
<div class="cell" style="left:900px;top:714.5px;letter-spacing:.1px">Sửa chữa</div>
<div class="cell" style="left:1078px;top:714.5px;letter-spacing:.2px">Tự bảo dưỡng</div>
<div class="cell" style="left:1200px;width:162px;text-align:right;top:714.5px;letter-spacing:.6px">20.000.000</div>
<div class="a" style="left:290px;top:747px;width:1079px;height:7px;background:#d4d4d4"></div>
<div class="a" style="left:223px;top:755px;width:1146px;height:16px;background:linear-gradient(90deg,#d7dce4,#d3d9e2)"></div>
<!-- /BOTTOM -->
<!-- FLOAT -->
<div class="a" style="left:1352px;top:349px;width:16px;height:16px;background:#2b4be0;border-radius:2px 0 0 2px"></div>
<svg class="a" style="left:1352px;top:349px" width="16" height="16" viewBox="0 0 16 16"><path d="M6.5 4.5l3.5 3.5-3.5 3.5" stroke="#fff" stroke-width="1.5" fill="none" stroke-linecap="round" stroke-linejoin="round"/></svg>
<div class="a" style="left:1312px;top:369px;width:60px;height:199px;background:#fff;border-radius:9px;box-shadow:0 0 6px rgba(0,0,0,0.08)"></div>
<svg class="a" style="left:1318px;top:375px" width="44" height="44" viewBox="0 0 44 44">
 <circle cx="22" cy="22" r="19.6" fill="#2d51e3"/>
 <g transform="translate(20.5 22) rotate(-45)" fill="#fff">
  <rect x="-6.4" y="-2.7" width="5.2" height="5.4" rx="1.6"/>
  <path d="M-1.6 -2.6 L5 -4.8 V4.8 L-1.6 2.6Z"/>
  <rect x="5" y="-5.6" width="2" height="11.2" rx="1"/>
  <rect x="-4.2" y="2.6" width="3.4" height="5" rx="1.7"/>
  <path d="M9 -3.2h1.8M9 0h2.2M9 3.2h1.8" stroke="#fff" stroke-width="0.9" stroke-linecap="round"/>
 </g>
</svg>
<svg class="a" style="left:1318px;top:422px" width="44" height="44" viewBox="0 0 44 44">
 <defs><linearGradient id="gg" x1="0" y1="0" x2="0" y2="1"><stop offset="0" stop-color="#1fca7c"/><stop offset="1" stop-color="#16975a"/></linearGradient></defs>
 <circle cx="22" cy="22.5" r="20" fill="url(#gg)"/>
 <path d="M9 22.5 Q14 11.5 22 11.3 Q30 11.5 35.8 22.5 Q30 33.5 22 33.7 Q14 33.5 9 22.5Z" fill="#fff"/>
 <path d="M21.8 15.6a6.9 6.9 0 1 1 0 13.8c-1 0-2-.2-2.9-.6l-3.6 1.3 1.1-3.1A6.9 6.9 0 0 1 21.8 15.6z" fill="#1aa866" transform="translate(29.5 0) scale(-1 1) translate(-14.6 0)"/>
 <circle cx="18.9" cy="22.5" r="1.5" fill="#fff"/><circle cx="24.7" cy="22.5" r="1.5" fill="#fff"/>
</svg>
<svg class="a" style="left:1318px;top:471px" width="44" height="44" viewBox="0 0 44 44">
 <circle cx="22" cy="22" r="20" fill="#1235c8"/>
 <circle cx="12" cy="14.5" r="4.6" fill="#d7e6fb"/><circle cx="32" cy="14.5" r="4.6" fill="#d7e6fb"/>
 <circle cx="12" cy="14.5" r="2.6" fill="#b5cdf2"/><circle cx="32" cy="14.5" r="2.6" fill="#b5cdf2"/>
 <path d="M7 23.5c0-6.5 6.5-10.5 15-10.5s15 4 15 10.5-6.5 10-15 10-15-3.5-15-10z" fill="#eef4fd"/>
 <rect x="11.5" y="18.2" width="21" height="11" rx="5.5" fill="#0f1f63"/>
 <circle cx="17.5" cy="23.4" r="2.3" fill="#8fa4c9"/><circle cx="26.5" cy="23.4" r="2.3" fill="#8fa4c9"/>
 <path d="M20 31q2 1.4 4 0" stroke="#0f1f63" stroke-width="1.1" fill="none"/>
</svg>
<svg class="a" style="left:1318px;top:519px" width="44" height="44" viewBox="0 0 44 44">
 <circle cx="22" cy="22" r="20" fill="#2d51e3"/>
 <circle cx="22" cy="17" r="3.4" fill="#fff"/>
 <circle cx="14.5" cy="18.5" r="2.6" fill="#fff"/><circle cx="29.5" cy="18.5" r="2.6" fill="#fff"/>
 <path d="M16.3 28.5c0-4 2.4-6.2 5.7-6.2s5.7 2.2 5.7 6.2z" fill="#fff"/>
 <path d="M10 27.5c0-3 1.8-4.8 4.5-4.8 1.3 0 2 .3 2.6.8-1 1.2-1.6 2.5-1.8 4z" fill="#fff"/>
 <path d="M34 27.5c0-3-1.8-4.8-4.5-4.8-1.3 0-2 .3-2.6.8 1 1.2 1.6 2.5 1.8 4z" fill="#fff"/>
</svg>
<div class="a" style="left:1316px;top:517px;width:15px;height:15px;border-radius:50%;background:#f5a623"></div>
<!-- /FLOAT -->
<!-- FRAME OVERLAY -->
<div class="a" style="left:0;top:0;width:1371px;height:1px;background:#000"></div>
<div class="a" style="left:0;top:772px;width:1371px;height:1px;background:#000"></div>
<div class="a" style="left:0;top:0;width:1px;height:773px;background:#000"></div>
<div class="a" style="left:1370px;top:0;width:1px;height:773px;background:#000"></div>
<div class="a" style="left:1369px;top:1px;width:1px;height:771px;background:#f3f4f7"></div>
<div class="a" style="left:1px;top:771px;width:1369px;height:1px;background:#f3f4f7"></div>
<div class="a" style="left:1px;top:1px;width:1px;height:771px;background:#eceef1"></div>
<div class="a" style="left:1px;top:1px;width:1369px;height:1px;background:#f5f6f8"></div>
</body></html>
